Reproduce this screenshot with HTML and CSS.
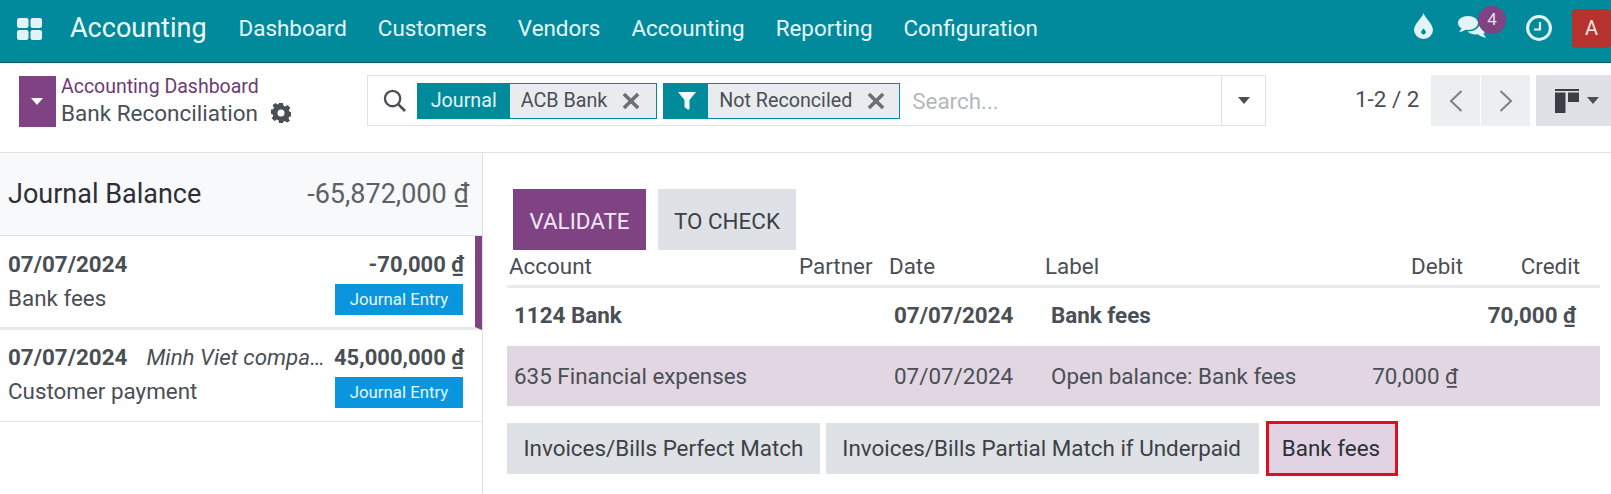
FILE: index.html
```html
<!DOCTYPE html>
<html lang="en">
<head>
<meta charset="utf-8">
<title>Bank Reconciliation</title>
<link rel="stylesheet" href="styles.css">
</head>
<body>
<header class="navbar">
  <svg class="apps" viewBox="0 0 25 22"><rect x="0" y="0" width="11.5" height="10" rx="2.2"/><rect x="13.5" y="0" width="11.5" height="10" rx="2.2"/><rect x="0" y="12" width="11.5" height="10" rx="2.2"/><rect x="13.5" y="12" width="11.5" height="10" rx="2.2"/></svg>
  <span class="brand">Accounting</span>
  <nav class="menu"><a>Dashboard</a><a>Customers</a><a>Vendors</a><a>Accounting</a><a>Reporting</a><a>Configuration</a></nav>
  <div class="systray">
    <svg class="drop" viewBox="0 0 19 26"><path fill-rule="evenodd" d="M9.5 0C11 5 19 11 19 17a9.5 9 0 0 1-19 0C0 11 8 5 9.5 0zM9.5 15.5c-1.2 1.5-2.4 2.4-2.4 3.6a2.4 2.4 0 0 0 4.8 0c0-1.2-1.2-2.1-2.4-3.6z"/></svg>
    <div class="chat">
      <svg class="chat-icon" viewBox="0 0 29 24"><path d="M10 0C4.5 0 0 3 0 7c0 2.200 1.300 4 3.500 5.300C3 13.800 2 15 1 16c2.500 0 5-1 6.500-2.200 .8.100 1.700.200 2.500.200 5.500 0 10-3 10-7s-4.500-7-10-7z"/><path d="M22 6.500c.4 3.800-4 9-12.500 9 2 2 5 3 8 3 1 0 1.700 0 2.500-.2 1.500 1.500 5 3.200 8.500 3.700-1.500-1-2.500-3-3-4.700 2-1.200 3.500-3 3.500-5 0-3-3-5.300-7-6z"/></svg>
      <span class="count">4</span>
    </div>
    <svg class="clock" viewBox="0 0 26 26"><circle cx="13" cy="13" r="11.400" fill="none" stroke-width="3"/><path d="M14 7v7.500H8" fill="none" stroke-width="2.200"/></svg>
    <span class="avatar">A</span>
  </div>
</header>

<section class="control">
  <button class="toggle"><i class="caret caret-white"></i></button>
  <div class="crumbs">
    <a class="crumb-link">Accounting Dashboard</a>
    <div class="crumb-current">Bank Reconciliation
      <svg class="gear" viewBox="0 0 20 20"><path fill-rule="evenodd" d="M8 0h4l.5 2.800 1.700.7L16.500 2l2.800 2.800-1.500 2.300.7 1.700 2.500.500v4l-2.800.5-.7 1.700 1.500 2.300-2.800 1.800-2.300-1.500-1.700.7L12 20H8l-.5-2.800-1.700-.7-2.300 1.500L.7 15.200l1.500-2.300-.7-1.700L-.5 10.700v-4l2.800-.5.7-1.700L1.500 2.200 4.300 0l2.300 1.500 1-.4zM10 6.500a3.500 3.500 0 1 0 0 7 3.500 3.500 0 0 0 0-7z"/></svg>
    </div>
  </div>
  <div class="search">
    <svg class="lens" viewBox="0 0 24 24"><circle cx="10" cy="10" r="8" fill="none" stroke-width="2.400"/><path d="M16 16l7 7" stroke-width="2.800"/></svg>
    <div class="facet">
      <span class="facet-head">Journal</span>
      <span class="facet-val">ACB Bank<svg class="x" viewBox="0 0 14 14"><path d="M1.500 1.500l11 11M12.500 1.500l-11 11"/></svg></span>
    </div>
    <div class="facet">
      <span class="facet-head facet-icon"><svg class="funnel" viewBox="0 0 18 18"><path d="M0 0h18l-6.500 8v8.500c0 1-1 1.500-1.800 1L6.500 15V8z"/></svg></span>
      <span class="facet-val">Not Reconciled<svg class="x" viewBox="0 0 14 14"><path d="M1.500 1.500l11 11M12.500 1.500l-11 11"/></svg></span>
    </div>
    <span class="placeholder">Search...</span>
    <span class="search-more"><i class="caret caret-dark"></i></span>
  </div>
  <div class="pager">
    <span class="pager-text">1-2 / 2</span>
    <div class="pager-btns">
      <button class="page-btn"><svg viewBox="0 0 14 24"><path d="M12.500 2L2 12l10.500 10"/></svg></button>
      <button class="page-btn"><svg viewBox="0 0 14 24"><path d="M1.500 2L12 12 1.500 22"/></svg></button>
    </div>
    <button class="view-btn">
      <svg class="kanban" viewBox="0 0 24 24"><path d="M0 0h24v2H0z"/><path d="M0 3.500h10.500V24H0z"/><path d="M13 3.500h11V13H13z"/></svg>
      <i class="caret caret-dark"></i>
    </button>
  </div>
</section>

<main class="body">
  <aside class="side">
    <div class="balance"><span class="balance-title">Journal Balance</span><span class="balance-amt">-65,872,000 <u>₫</u></span></div>
    <article class="item item-active">
      <div class="item-line"><b>07/07/2024</b><b class="amt">-70,000 <u>₫</u></b></div>
      <div class="item-line item-sub"><span>Bank fees</span><span class="tag">Journal Entry</span></div>
    </article>
    <article class="item item-second">
      <div class="item-line"><b>07/07/2024</b><em class="partner">Minh Viet company limited</em><b class="amt">45,000,000 <u>₫</u></b></div>
      <div class="item-line item-sub"><span>Customer payment</span><span class="tag">Journal Entry</span></div>
    </article>
  </aside>
  <section class="detail">
    <div class="actions"><button class="btn btn-primary">VALIDATE</button><button class="btn btn-grey">TO CHECK</button></div>
    <table class="lines">
      <thead>
        <tr><th class="c-account">Account</th><th class="c-partner">Partner</th><th class="c-date">Date</th><th class="c-label">Label</th><th class="c-debit">Debit</th><th class="c-credit">Credit</th></tr>
      </thead>
      <tbody>
        <tr class="row-bold"><td class="first">1124 Bank</td><td></td><td>07/07/2024</td><td>Bank fees</td><td></td><td class="num">70,000 <u>₫</u></td></tr>
        <tr class="row-sel"><td class="first">635 Financial expenses</td><td></td><td>07/07/2024</td><td>Open balance: Bank fees</td><td class="num">70,000 <u>₫</u></td><td></td></tr>
      </tbody>
    </table>
    <div class="models">
      <button class="model">Invoices/Bills Perfect Match</button>
      <button class="model model-wide">Invoices/Bills Partial Match if Underpaid</button>
      <button class="model model-hl">Bank fees</button>
    </div>
  </section>
</main>
</body>
</html>
```
FILE: styles.css
```css
* { box-sizing: border-box; }
html, body { margin: 0; height: 494px; overflow: hidden; background: #fff; }
body { font-family: Roboto, "Liberation Sans", sans-serif; font-size: 22.400px; color: #4a4f55; }
button { font: inherit; border: 0; padding: 0; }

.navbar { height: 63px; background: #018a9b; border-bottom: 1px solid #02606c; display: flex; align-items: center; color: #e6f6f8; }
.apps { width: 25px; height: 22px; margin: -4px 0 0 17px; fill: #e3f4f6; }
.brand { font-size: 27px; margin: -7px 0 0 28px; color: #eef9fa; }
.menu { display: flex; gap: 31px; margin: -6px 0 0 32px; font-size: 22.400px; }
.systray { margin-left: auto; display: flex; align-items: center; height: 100%; padding-bottom: 6px; }
.drop { width: 19px; height: 26px; fill: #e3f4f6; margin: -4px 26px 0 0; }
.chat { position: relative; width: 29px; height: 24px; margin: 0 39px 0 -1px; }
.chat-icon { width: 29px; height: 24px; fill: #e3f4f6; display: block; }
.count { position: absolute; left: 20px; top: -10px; width: 28px; height: 28px; border-radius: 50%; background: #7f4282; color: #eadcec; font-size: 17px; text-align: center; line-height: 26px; }
.clock { width: 26px; height: 26px; stroke: #e3f4f6; margin-right: 20px; }
.avatar { width: 39px; height: 39px; background: #b5322f; color: #f8e6e5; border-radius: 4px; font-size: 20px; display: flex; align-items: center; justify-content: center; }

.control { height: 90px; border-bottom: 1px solid #dee2e6; display: flex; align-items: flex-start; padding: 13px 0 0 19px; }
.toggle { width: 37px; height: 51px; background: #7f4282; display: flex; align-items: center; justify-content: center; }
.caret { display: block; width: 0; height: 0; border-left: 6.500px solid transparent; border-right: 6.500px solid transparent; border-top: 7px solid #fff; }
.caret-dark { border-top-color: #4a4f55; }
.crumbs { margin-left: 5px; width: 306px; }
.crumb-link { display: block; color: #6e3a73; font-size: 19.500px; line-height: 24px; margin-top: -1px; }
.crumb-current { font-size: 22.500px; line-height: 28px; display: flex; align-items: center; gap: 13px; }
.gear { width: 20px; height: 20px; fill: #4a4f55; }
.search { width: 900px; height: 51px; margin-top: -1px; border: 1px solid #dee2e6; display: flex; align-items: center; padding-left: 15px; }
.lens { width: 23px; height: 23px; stroke: #4a4f55; fill: none; margin-right: 11px; flex: none; }
.facet { height: 36px; display: flex; border: 1px solid #018a9b; margin-right: 6px; background: #e9ecef; }
.facet-head { background: #018a9b; color: #e3f4f6; display: flex; align-items: center; padding: 0 13px; font-size: 19.700px; }
.facet-icon { padding: 0 12px 0 14px; }
.facet-val { display: flex; align-items: center; padding: 0 16px 0 11px; font-size: 19.700px; }
.facet-icon + .facet-val { padding-right: 14px; }
.funnel { width: 18px; height: 18px; fill: #f2fbfc; }
.x { width: 18px; height: 18px; margin-left: 15px; fill: none; stroke: #6c7075; stroke-width: 2.800; }
.placeholder { margin-left: 6px; color: #b4b8bc; font-size: 22.400px; }
.search-more { margin-left: auto; width: 44px; height: 100%; border-left: 1px solid #dee2e6; display: flex; align-items: center; justify-content: center; }
.pager { display: flex; align-items: center; height: 51px; margin-left: 0; flex: 1; margin-top: -1px; }
.pager-text { margin-left: 89px; font-size: 22.400px; width: 76px; white-space: nowrap; margin-top: -3px; }
.pager-btns { display: flex; gap: 1px; }
.page-btn { width: 49px; height: 51px; background: #eceef0; display: flex; align-items: center; justify-content: center; }
.page-btn svg { width: 14px; height: 24px; fill: none; stroke: #7c7f83; stroke-width: 2; }
.view-btn { width: 75px; height: 51px; background: #dee2e6; margin-left: 6px; display: flex; align-items: center; gap: 8px; padding-left: 19px; }
.kanban { width: 24px; height: 24px; fill: #3a3f45; }

.body { display: flex; height: 341px; }
.side { width: 483px; border-right: 1px solid #dee2e6; flex: none; }
.balance { height: 83px; background: #f8f9fa; border-bottom: 1px solid #dee2e6; display: flex; justify-content: space-between; align-items: center; padding: 0 13px 0 8px; }
.balance-title { font-size: 27px; color: #2c3036; }
.balance-amt { font-size: 27px; color: #5c6166; }
.item { height: 94px; padding: 15px 19px 0 8px; border-bottom: 3px solid #e6e8eb; position: relative; }
.item-second { border-bottom-width: 1px; height: 92px; padding-top: 14px; }
.item-active { border-right: 7px solid #7f4282; padding-right: 12px; }
.item-line { display: flex; align-items: center; font-size: 22.400px; line-height: 27px; }
.item-line b { font-weight: 700; }
.amt { margin-left: auto; margin-right: -1px; flex: none; font-size: 22px; }
.partner { margin-left: 19px; flex: 0 0 184px; width: 184px; overflow: hidden; white-space: nowrap; text-overflow: ellipsis; }
.item-sub { justify-content: space-between; margin-top: 6px; }
.item-sub span:first-child { margin-top: -2px; }
.tag { width: 128px; height: 31px; background: #0a96de; color: #e6f6fd; font-size: 16.800px; display: flex; align-items: center; justify-content: center; }

.detail { flex: 1; padding: 36px 11px 0 24px; min-width: 0; }
.actions { display: flex; gap: 12px; margin-left: 6px; }
.btn { height: 61px; font-size: 22.400px; padding-top: 3px; }
.btn-primary { width: 133px; background: #7f4282; color: #f2e8f3; }
.btn-grey { width: 138px; background: #dee2e6; color: #3c4147; }
.lines { width: 1093px; border-collapse: collapse; table-layout: fixed; }
.lines th { font-weight: 400; font-size: 22.400px; text-align: left; padding: 0 3px 2px 2px; height: 36px; border-bottom: 3px solid #e9ecef; }
.c-account { width: 289px; }
.c-partner { width: 90px; }
.c-date { width: 157px; }
.c-label { width: 300px; }
.c-debit { width: 128px; }
.c-credit { width: 129px; }
.lines th.c-partner, .lines th.c-date { padding-left: 3px; }
.lines th.c-debit { padding-right: 8px; padding-left: 0; text-align: right; }
.lines th.c-credit { padding-right: 20px; text-align: right; }
.lines td { font-size: 22.400px; padding: 0 8px; height: 60px; }
.lines td.first { padding-left: 7px; }
.row-bold td { font-weight: 700; padding-bottom: 3px; }
.row-sel td { background: #e1d6e2; }
.lines .num { text-align: right; }
.row-bold .num { padding-right: 24px; }
.row-sel .num { padding-right: 13px; }
.models { display: flex; gap: 6px; margin-top: 17px; align-items: center; }
.model { height: 51px; background: #dee2e6; color: #3c4147; font-size: 22.400px; padding: 0 16.500px 2px; white-space: nowrap; }
.model-wide { padding-right: 18.500px; }
.model-hl { background: #e1d3e3; outline: 3px solid #e00e1e; outline-offset: -1px; margin-left: 3px; width: 128px; padding: 0 3px 2px 0; color: #2c3036; }
```
